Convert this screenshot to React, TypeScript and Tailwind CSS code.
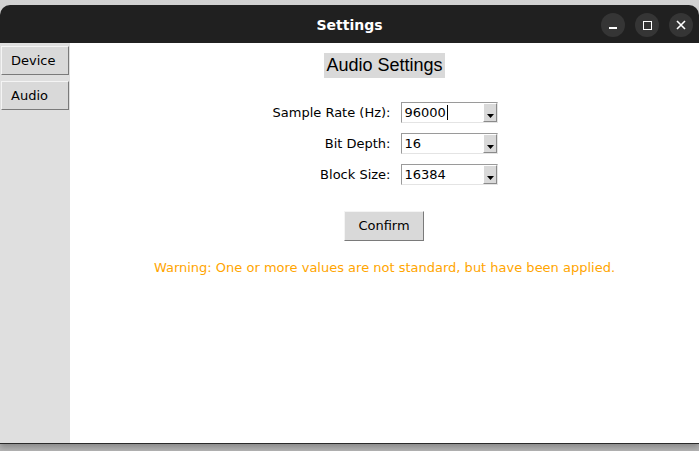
import { useState } from "react";

type ComboProps = {
  value: string;
  caret?: boolean;
};

const Combo = ({ value, caret }: ComboProps) => {
  return (
    <div className="flex h-[21px] w-[97px] border border-t-[#9a9a9a] border-l-[#9a9a9a] border-b-[#e4e4e4] border-r-[#e4e4e4] bg-white">
      <div className="flex flex-1 items-center pl-[2px] text-[13px] leading-none text-black">
        {value}
        {caret && <span className="ml-px inline-block h-[15px] w-px bg-black" />}
      </div>
      <div className="flex w-[14px] items-end justify-center border border-t-white border-l-white border-b-[#8a8a8a] border-r-[#8a8a8a] bg-[#d9d9d9] pb-[3px]">
        <svg width="7" height="4" viewBox="0 0 7 4">
          <polygon points="0,0 7,0 3.5,4" fill="#000" />
        </svg>
      </div>
    </div>
  );
};

const rows = [
  { label: "Sample Rate (Hz):", value: "96000", caret: true },
  { label: "Bit Depth:", value: "16" },
  { label: "Block Size:", value: "16384" },
];

const TkButton = ({
  children,
  className,
  onClick,
}: {
  children: React.ReactNode;
  className?: string;
  onClick?: () => void;
}) => (
  <button
    onClick={onClick}
    className={`border border-t-[#f4f4f4] border-l-[#f4f4f4] border-b-[#7a7a7a] border-r-[#7a7a7a] bg-[#d9d9d9] text-[13px] text-black ${className ?? ""}`}
  >
    {children}
  </button>
);

export default function App() {
  const [tab, setTab] = useState("Audio");

  return (
    <div
      className="h-[451px] w-[699px] overflow-hidden bg-[linear-gradient(#d2d2d2,#b4b4b4)]"
      style={{ fontFamily: '"DejaVu Sans", sans-serif' }}
    >
      <div className="mt-[5px] flex flex-col">
        {/* title bar */}
        <div className="relative flex h-[38px] items-center justify-center rounded-t-[10px] bg-[#202020] pt-[3px]">
          <span className="text-[14px] font-bold text-white">Settings</span>
          <div className="absolute right-[6px] top-[8px] flex gap-[10px]">
            <div className="flex h-[24px] w-[24px] items-center justify-center rounded-full bg-[#353535]">
              <div className="mt-[6px] h-[2px] w-[8px] bg-white" />
            </div>
            <div className="flex h-[24px] w-[24px] items-center justify-center rounded-full bg-[#353535]">
              <div className="h-[9px] w-[9px] border-[1.5px] border-white" />
            </div>
            <div className="flex h-[24px] w-[24px] items-center justify-center rounded-full bg-[#353535]">
              <svg width="10" height="10" viewBox="0 0 10 10">
                <path d="M1 1 L9 9 M9 1 L1 9" stroke="#fff" strokeWidth="1.6" />
              </svg>
            </div>
          </div>
        </div>

        {/* body */}
        <div className="flex h-[401px] border-b border-[#2a2a2a] shadow-[0_3px_6px_rgba(0,0,0,0.25)]">
          <div className="flex w-[70px] flex-col gap-[6px] bg-[#dfdfdf] px-px pt-[3px]">
            {["Device", "Audio"].map((t) => (
              <TkButton key={t} onClick={() => setTab(t)} className="h-[29px] w-[68px] pl-[9px] text-left">
                {t}
              </TkButton>
            ))}
          </div>
          <div className="flex flex-1 flex-col items-center bg-white pt-[10px]">
            <div
              className="bg-[#d9d9d9] px-[2px] py-[3px] text-[18px] leading-[19px] text-black"
              style={{ fontFamily: '"Liberation Sans", Arial, sans-serif' }}
            >
              {tab === "Audio" ? "Audio Settings" : "Device Settings"}
            </div>
            <div className="ml-[2px] mt-[24px] grid grid-cols-[auto_auto] items-center gap-x-[11px] gap-y-[10px]">
              {rows.map((r) => (
                <div key={r.label} className="contents">
                  <div className="text-right text-[13px] text-black">{r.label}</div>
                  <Combo value={r.value} caret={r.caret} />
                </div>
              ))}
            </div>
            <TkButton className="ml-[-1px] mt-[26px] h-[30px] w-[80px]">Confirm</TkButton>
            <div className="mt-[17px] text-[13px] text-[#ffa500]">
              Warning: One or more values are not standard, but have been applied.
            </div>
          </div>
        </div>
      </div>
    </div>
  );
}
